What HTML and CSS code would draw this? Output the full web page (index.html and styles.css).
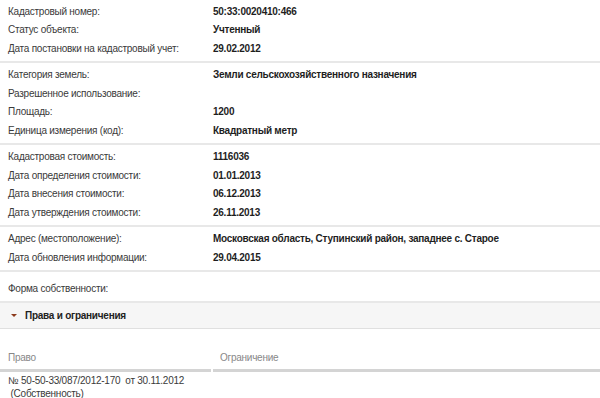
FILE: index.html
```html
<!DOCTYPE html>
<html lang="ru">
<head>
<meta charset="utf-8">
<link rel="stylesheet" href="styles.css">
</head>
<body>
<div class="info">
  <div class="group first">
    <div class="row"><span class="label">Кадастровый номер:</span><span class="value">50:33:0020410:466</span></div>
    <div class="row"><span class="label">Статус объекта:</span><span class="value">Учтенный</span></div>
    <div class="row"><span class="label">Дата постановки на кадастровый учет:</span><span class="value">29.02.2012</span></div>
  </div>
  <div class="group">
    <div class="row"><span class="label">Категория земель:</span><span class="value">Земли сельскохозяйственного назначения</span></div>
    <div class="row"><span class="label">Разрешенное использование:</span><span class="value"></span></div>
    <div class="row"><span class="label">Площадь:</span><span class="value">1200</span></div>
    <div class="row"><span class="label">Единица измерения (код):</span><span class="value">Квадратный метр</span></div>
  </div>
  <div class="group">
    <div class="row"><span class="label">Кадастровая стоимость:</span><span class="value">1116036</span></div>
    <div class="row"><span class="label">Дата определения стоимости:</span><span class="value">01.01.2013</span></div>
    <div class="row"><span class="label">Дата внесения стоимости:</span><span class="value">06.12.2013</span></div>
    <div class="row"><span class="label">Дата утверждения стоимости:</span><span class="value">26.11.2013</span></div>
  </div>
  <div class="group">
    <div class="row"><span class="label">Адрес (местоположение):</span><span class="value">Московская область, Ступинский район, западнее с. Старое</span></div>
    <div class="row"><span class="label">Дата обновления информации:</span><span class="value">29.04.2015</span></div>
  </div>
  <div class="group single">
    <div class="row"><span class="label">Форма собственности:</span><span class="value"></span></div>
  </div>
</div>
<div class="section-head">
  <span class="arrow"></span>
  <span class="section-title">Права и ограничения</span>
</div>
<div class="rights">
  <div class="rights-head">
    <div class="col col-right">Право</div>
    <div class="col col-limit">Ограничение</div>
  </div>
  <div class="rights-row">
    <div class="col col-right">№ 50-50-33/087/2012-170&nbsp; от 30.11.2012<br>&nbsp;(Собственность)</div>
    <div class="col col-limit"></div>
  </div>
</div>
</body>
</html>
```
FILE: styles.css
```css
html, body {
  margin: 0;
  padding: 0;
  background: #fff;
}
body {
  font-family: "Liberation Sans", Arial, sans-serif;
  font-size: 10px;
  letter-spacing: -0.25px;
  color: #3a3a3a;
  width: 600px;
  overflow: hidden;
}
.group {
  padding: 3px 0 3px;
  border-bottom: 2px solid #e8e8e8;
}
.group.first {
  padding-top: 2px;
  padding-bottom: 3px;
}
.group.single {
  padding: 8px 0 3px;
}
.row {
  display: grid;
  grid-template-columns: 205px 1fr;
  height: 18.5px;
  align-items: center;
  padding-left: 8px;
  white-space: nowrap;
}
.label {
  color: #3a3a3a;
}
.value {
  font-weight: bold;
  color: #1e1e1e;
}
.section-head {
  display: flex;
  align-items: center;
  height: 25px;
  background: #f6f6f6;
  border-bottom: 1px solid #e0e0e0;
  padding-left: 11px;
}
.arrow {
  width: 0;
  height: 0;
  border-left: 3px solid transparent;
  border-right: 3px solid transparent;
  border-top: 3px solid #8c3b1c;
  margin-right: 8px;
}
.section-title {
  font-weight: bold;
  color: #222;
}
.rights {
  padding-top: 17px;
}
.rights-head {
  display: grid;
  grid-template-columns: 211px 1fr;
  column-gap: 2px;
  color: #888;
}
.rights-head .col {
  height: 23px;
  line-height: 23px;
  border-bottom: 3px solid #d4d4d4;
}
.col-right {
  padding-left: 8px;
  white-space: nowrap;
}
.col-limit {
  padding-left: 7px;
}
.rights-row {
  display: grid;
  grid-template-columns: 211px 1fr;
  column-gap: 2px;
  border-bottom: 1px solid #e4e4e4;
  padding: 2px 0 1px;
  line-height: 13px;
}
```
